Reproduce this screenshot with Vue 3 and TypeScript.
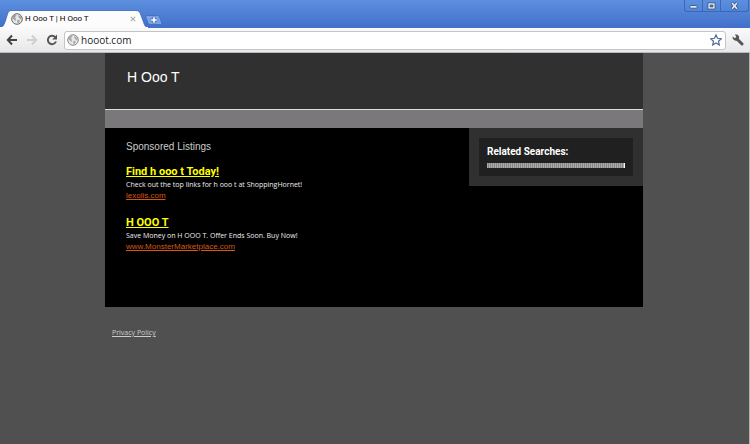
<script setup lang="ts">
import { ref } from 'vue'

interface Listing {
  title: string
  text: string
  site: string
}

const address = ref('hooot.com')
const listings: Listing[] = [
  { title: 'Find h ooo t Today!', text: 'Check out the top links for h ooo t at ShoppingHornet!', site: 'lexolis.com' },
  { title: 'H OOO T', text: 'Save Money on H OOO T. Offer Ends Soon. Buy Now!', site: 'www.MonsterMarketplace.com' },
]
</script>

<template>
  <div class="browser">
    <header class="titlebar">
      <div class="tab">
        <svg class="tab-shape" viewBox="0 0 148 18" aria-hidden="true">
          <path d="M0 17.500C3 17 4 15 5 12L7.500 4C8.500 1.200 9.500 .500 12 .500H136C138.500 .500 139.500 1.500 140.500 4L143.500 12C144.500 15.500 145.500 17 148 17.500V18H0Z" fill="#fcfcfd" stroke="#3765b5" stroke-width=".8" />
          <path d="M0 17.500H148" stroke="#fafafb" />
        </svg>
        <div class="tab-content">
          <svg class="globe" viewBox="0 0 12 12" aria-hidden="true">
            <circle cx="6" cy="6" r="5.300" fill="#e8e8e8" stroke="#666" />
            <path d="M1.500 3.500L4.500 1.500 5.500 2.500 4 4.200 5 6 4.200 8.500 3.200 6.500 1.500 5.500ZM7 2L10 3.500 10.500 6.500 9 6 7.500 4ZM6.200 7L8.500 6.800 8.500 9 6.500 10.500Z" fill="#a0a0a0" />
          </svg>
          <span class="tab-title">H Ooo T | H Ooo T</span>
          <button class="tab-close" type="button" aria-label="Close tab">
            <svg viewBox="0 0 6 6"><path d="M.8.8l4.400 4.400M5.200.8L.8 5.200" stroke="#aaa" stroke-width="1.100" /></svg>
          </button>
        </div>
      </div>
      <button class="new-tab" type="button" aria-label="New tab">
        <svg viewBox="0 0 18 10">
          <path d="M2 .5H12.500Q14 .5 14.500 2L16.800 8Q17.200 9.500 15.500 9.500H5Q3.500 9.500 3 8L.8 2Q.5.5 2 .5Z" fill="#7ba3e3" stroke="#3f6cb9" stroke-width=".8" />
          <path d="M9 1.800V8.200M5.800 5H12.200" stroke="#426eb7" stroke-width="3" />
          <path d="M9 2.200V7.800M6.200 5H11.800" stroke="#fff" stroke-width="1.700" />
        </svg>
      </button>
      <div class="window-buttons">
        <button type="button" aria-label="Minimize">
          <svg viewBox="0 0 10 10"><rect x="1" y="5" width="8" height="3" rx="1" fill="#e5e8ef" stroke="#365786" /></svg>
        </button>
        <button type="button" aria-label="Maximize">
          <svg viewBox="0 0 10 10"><path d="M1 2H9V9H1Z" fill="#e5e8ef" stroke="#365786" /><path d="M3.500 4.500H6.500V6.500H3.500Z" fill="#5587d2" stroke="#365786" /></svg>
        </button>
        <button class="wide" type="button" aria-label="Close">
          <svg viewBox="0 0 10 10"><path d="M2 2L8 9M8 2L2 9" stroke="#365786" stroke-width="3.400" /><path d="M2.300 2.300L7.700 8.700M7.700 2.300L2.300 8.700" stroke="#eceef3" stroke-width="1.700" /></svg>
        </button>
      </div>
    </header>

    <nav class="toolbar" aria-label="Navigation">
      <div class="tools">
        <button class="tool" type="button" aria-label="Back">
          <svg viewBox="0 0 12 12"><path d="M6 1.500L1.800 6 6 10.500M2 6H11" fill="none" stroke="#444" stroke-width="2" /></svg>
        </button>
        <button class="tool" type="button" aria-label="Forward" disabled>
          <svg viewBox="0 0 12 12"><path d="M6 1.500L10.200 6 6 10.500M10 6H1" fill="none" stroke="#d0d0d0" stroke-width="2" /></svg>
        </button>
        <button class="tool" type="button" aria-label="Reload">
          <svg viewBox="0 0 12 12"><path d="M9.200 3.200A4.200 4.200 0 1 0 10 7.500" fill="none" stroke="#555" stroke-width="1.900" /><path d="M11 .6V5.400H6.200Z" fill="#555" /></svg>
        </button>
      </div>
      <div class="omnibox">
        <svg class="globe" viewBox="0 0 12 12" aria-hidden="true">
          <circle cx="6" cy="6" r="5.300" fill="#e8e8e8" stroke="#888" />
          <path d="M1.500 3.500L4.500 1.500 5.500 2.500 4 4.200 5 6 4.200 8.500 3.200 6.500 1.500 5.500ZM7 2L10 3.500 10.500 6.500 9 6 7.500 4ZM6.200 7L8.500 6.800 8.500 9 6.500 10.500Z" fill="#aaa" />
        </svg>
        <input v-model="address" class="address" type="text" aria-label="Address" />
        <button class="star" type="button" aria-label="Bookmark">
          <svg viewBox="0 0 12 12"><path d="M6 .9L7.500 4.300 11.300 4.700 8.500 7.200 9.300 11 6 9 2.700 11 3.500 7.200.7 4.700 4.500 4.300Z" fill="#fff" stroke="#526a99" stroke-width="1.200" /></svg>
        </button>
      </div>
      <button class="tool" type="button" aria-label="Settings">
        <svg viewBox="0 0 12 12"><path d="M4.700 4.700L10 10" stroke="#555" stroke-width="3" stroke-linecap="round" /><path d="M.5 2.500L3 4.200 4.400 3 2.900.5C5.800 0 7.800 2 7 4.500L5 6.700C2.500 7.200.2 5.200.5 2.500Z" fill="#555" /></svg>
      </button>
    </nav>

    <main class="page">
      <div class="site">
        <div class="masthead"><h1>H Ooo T</h1></div>
        <div class="band"></div>
        <div class="content">
          <section class="listings">
            <h2>Sponsored Listings</h2>
            <article v-for="item in listings" :key="item.title" class="listing">
              <h3><a href="#">{{ item.title }}</a></h3>
              <p>{{ item.text }}</p>
              <a class="site-link" href="#">{{ item.site }}</a>
            </article>
          </section>
          <aside class="related">
            <div class="related-box">
              <h2>Related Searches:</h2>
              <div class="related-bar"></div>
            </div>
          </aside>
        </div>
        <footer><a href="#">Privacy Policy</a></footer>
      </div>
    </main>
  </div>
</template>

<style>
body {
  background: #505050;
}
</style>

<style scoped>
* {
  box-sizing: border-box;
}
.browser {
  display: flex;
  flex-direction: column;
  min-height: 100vh;
  font-family: "Liberation Sans", Arial, sans-serif;
}
button {
  display: flex;
  align-items: center;
  justify-content: center;
  padding: 0;
  border: 0;
  background: none;
}
h1, h2, h3, p {
  margin: 0;
  font-weight: normal;
}
svg {
  display: block;
  flex: none;
}
.titlebar {
  display: flex;
  align-items: flex-end;
  height: 28px;
  background: linear-gradient(#5c90df, #416fca);
}
.tab {
  position: relative;
  width: 148px;
  height: 18px;
}
.tab-shape {
  position: absolute;
  inset: 0;
  width: 148px;
  height: 18px;
}
.tab-content {
  position: relative;
  display: flex;
  align-items: center;
  height: 18px;
  padding: 0 12px 0 11px;
}
.globe {
  width: 12px;
  height: 12px;
}
.tab-title {
  flex: 1;
  margin-left: 2px;
  font-family: Roboto, sans-serif;
  font-size: 8px;
  line-height: 20px;
  white-space: nowrap;
  color: #000;
}
.tab-close svg {
  width: 6px;
  height: 6px;
}
.new-tab {
  margin: 0 0 3px -3px;
}
.new-tab svg {
  width: 18px;
  height: 10px;
}
.window-buttons {
  display: flex;
  align-self: flex-start;
  height: 12px;
  margin: 0 1px 0 auto;
  border: 1px solid #3a68b5;
  border-top: 0;
  border-radius: 0 0 3px 3px;
}
.window-buttons button {
  width: 18px;
  border-right: 1px solid #3a68b5;
}
.window-buttons .wide {
  width: 27px;
  border-right: 0;
}
.window-buttons svg {
  width: 9px;
  height: 9px;
}
.toolbar {
  display: flex;
  align-items: center;
  gap: 6px;
  height: 25px;
  padding: 0 6px;
  border-bottom: 1px solid #babac0;
  background: linear-gradient(#fafafb, #e7e7e9);
}
.tools {
  display: flex;
  gap: 8px;
}
.tool svg {
  width: 12px;
  height: 12px;
}
.omnibox {
  display: flex;
  flex: 1;
  align-items: center;
  gap: 2px;
  height: 19px;
  padding: 0 3px 0 2px;
  border: 1px solid #c4c4c8;
  border-radius: 3px;
  background: #fff;
}
.address {
  flex: 1;
  min-width: 0;
  padding: 0;
  border: 0;
  outline: 0;
  background: none;
  color: #222;
  font-family: "Open Sans", sans-serif;
  font-size: 10px;
  line-height: 17px;
}
.star svg {
  width: 12px;
  height: 12px;
}
.page {
  flex: 1;
  padding-right: 1px;
  border-right: 1px solid #b0b0b0;
  background: #505050;
}
.site {
  width: 100%;
  max-width: 538px;
  margin: 0 auto;
}
.masthead {
  height: 56px;
  padding: 14px 22px;
  background: #303030;
}
.masthead h1 {
  color: #fff;
  font-size: 14px;
  line-height: 20px;
}
.band {
  height: 19px;
  border-top: 1px solid #ddd;
  background: #7b787b;
}
.content {
  display: flex;
  align-items: flex-start;
  min-height: 179px;
  background: #000;
}
.listings {
  flex: 1;
  padding: 12px 21px;
}
.listings h2 {
  margin-bottom: 11px;
  color: #ccc;
  font-size: 10px;
  line-height: 13px;
}
.listing {
  margin-bottom: 14px;
}
.listing h3 {
  font-family: Roboto, sans-serif;
  font-size: 11px;
  font-weight: bold;
  line-height: 15px;
}
.listing h3 a {
  color: #ff0;
}
.listing p {
  color: #eee;
  font-family: "Open Sans", sans-serif;
  font-size: 7px;
  line-height: 11px;
}
.site-link {
  display: block;
  color: #d85610;
  font-size: 8px;
  line-height: 11px;
}
.related {
  width: 174px;
  padding: 10px;
  background: #303030;
}
.related-box {
  padding: 7px 8px 8px;
  background: #202020;
}
.related-box h2 {
  color: #fff;
  font-family: Roboto, sans-serif;
  font-size: 10px;
  font-weight: bold;
  line-height: 13px;
}
.related-bar {
  height: 5px;
  margin-top: 5px;
  border-right: 1px solid #fff;
  background: repeating-linear-gradient(90deg, #aaa 0 1px, #858585 1px 2px);
}
footer {
  padding: 20px 7px;
  font-family: "Open Sans", sans-serif;
  font-size: 7px;
  line-height: 11px;
}
footer a {
  color: #ccc;
}
</style>
